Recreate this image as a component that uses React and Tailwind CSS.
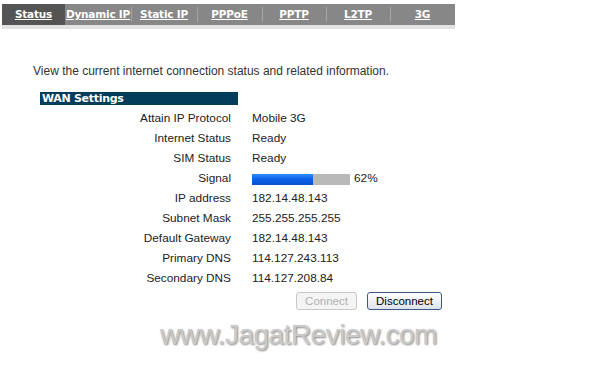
const tabs = [
  { label: "Status", w: "w-[63px]", active: true },
  { label: "Dynamic IP", w: "w-[66px]" },
  { label: "Static IP", w: "w-[66px]" },
  { label: "PPPoE", w: "w-[65px]" },
  { label: "PPTP", w: "w-[64px]" },
  { label: "L2TP", w: "w-[64px]" },
  { label: "3G", w: "w-[65px]" },
];

const rows = [
  ["Attain IP Protocol", "Mobile 3G"],
  ["Internet Status", "Ready"],
  ["SIM Status", "Ready"],
  ["Signal", null],
  ["IP address", "182.14.48.143"],
  ["Subnet Mask", "255.255.255.255"],
  ["Default Gateway", "182.14.48.143"],
  ["Primary DNS", "114.127.243.113"],
  ["Secondary DNS", "114.127.208.84"],
];

function SignalBar({ pct }) {
  return (
    <div className="flex items-center gap-[4px]">
      <div className="w-[98px] h-[11px] bg-[#b9b9b9] flex">
        <div className="h-full bg-gradient-to-b from-[#2d8cff] via-[#0a5fe8] to-[#0a4fd0]" style={{ width: `${pct}%` }} />
      </div>
      <span>{pct}%</span>
    </div>
  );
}

export default function App() {
  return (
    <div className="w-[600px] h-[392px] bg-white text-[11.8px] text-[#222] font-['Liberation_Sans',Arial,sans-serif] overflow-hidden">
      <div className="pt-[4px] pl-[2px]">
        <div className="w-[453px] h-[21px] bg-[#878787] flex">
          {tabs.map((t, i) => (
            <div key={t.label} className={`${t.w} h-full flex items-center justify-center relative ${t.active ? "bg-[#545454]" : ""}`}>
              {i > 1 && <div className="absolute left-0 top-[3px] bottom-[3px] w-px bg-[#a3a3a3]" />}
              <span className="text-white font-bold underline font-['DejaVu_Sans',Verdana,sans-serif] text-[10.5px] tracking-[-0.2px]">{t.label}</span>
            </div>
          ))}
        </div>
        <div className="w-[453px] h-[4px] bg-[#e2e2e2]" />
      </div>

      <p className="pl-[33px] pt-[33px] text-[12px] leading-[18px] text-[#333]">View the current internet connection status and related information.</p>

      <div className="ml-[40px] mt-[12px] w-[198px] h-[13px] bg-[#033d5c] text-white font-bold text-[11px] leading-[13px] pl-[2px] font-['DejaVu_Sans',Verdana,sans-serif] tracking-[-0.3px]">
        WAN Settings
      </div>

      <div className="mt-[4px] flex flex-col">
        {rows.map(([k, v]) => (
          <div key={k} className="h-[20px] flex items-center">
            <div className="w-[231px] text-right">{k}</div>
            <div className="pl-[21px]">{v === null ? <SignalBar pct={62} /> : v}</div>
          </div>
        ))}
      </div>

      <div className="flex gap-[10px] pl-[296px] mt-[3px]">
        <button className="w-[61px] h-[18px] rounded-[3px] border border-[#c8c8c8] bg-[#f4f4f4] text-[#b0b0b0] text-[11.5px] font-['Liberation_Sans',Arial,sans-serif]">Connect</button>
        <button className="w-[75px] h-[18px] rounded-[3px] border border-[#3c5a85] bg-gradient-to-b from-white to-[#dde3ee] text-black text-[11.5px] font-['Liberation_Sans',Arial,sans-serif]">Disconnect</button>
      </div>

      <div className="pl-[160px] mt-[10px] text-[28px] leading-[30px] text-[#c9c9c9] tracking-[-0.5px] font-['Liberation_Sans',Arial,sans-serif] [text-shadow:1px_1px_2px_#888]">
        www.JagatReview.com
      </div>
    </div>
  );
}
